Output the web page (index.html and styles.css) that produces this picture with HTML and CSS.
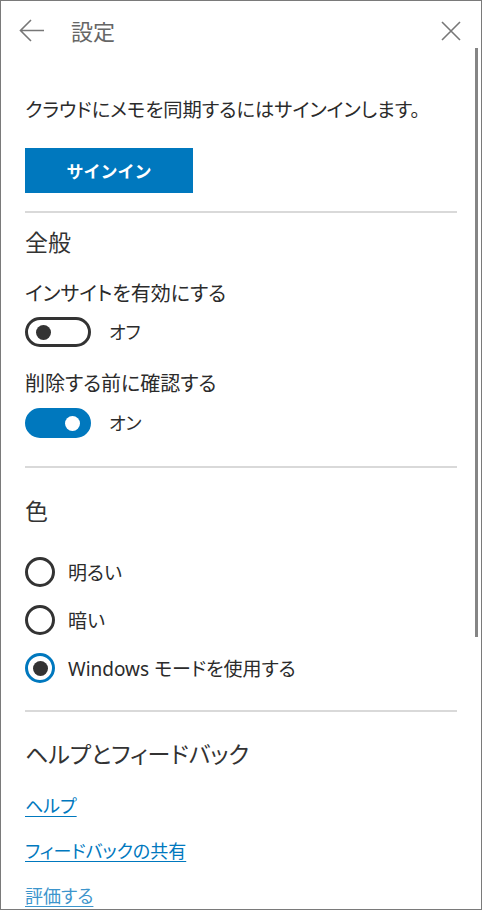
FILE: index.html
```html
<!DOCTYPE html>
<html lang="ja">
<head>
    <meta charset="UTF-8">
    <meta name="viewport" content="width=device-width, initial-scale=1.0">
    <title>設定</title>
    <link rel="stylesheet" href="styles.css">
</head>

<body>
    <div class="panel">
        <header class="titlebar">
            <svg class="icon-back" width="26" height="24" viewBox="0 0 26 24">
                <path d="M25 11.5 H1.5 M12 1 L1.5 11.5 L12 22" fill="none" stroke="#777" stroke-width="1.6"/>
            </svg>
            <h1>設定</h1>
            <svg class="icon-close" width="20" height="20" viewBox="0 0 20 20">
                <path d="M1 1 L19 19 M19 1 L1 19" fill="none" stroke="#777" stroke-width="1.6"/>
            </svg>
        </header>

        <div class="content">
            <p class="intro">クラウドにメモを同期するにはサインインします。</p>
            <button class="signin">サインイン</button>
            <hr class="divider">

            <!-- General -->
            <section class="general">
                <h2>全般</h2>
                <div class="setting">
                    <p class="label">インサイトを有効にする</p>
                    <div class="toggle-row">
                        <span class="toggle"><span class="knob"></span></span>
                        <span>オフ</span>
                    </div>
                </div>
                <div class="setting">
                    <p class="label">削除する前に確認する</p>
                    <div class="toggle-row">
                        <span class="toggle on"><span class="knob"></span></span>
                        <span>オン</span>
                    </div>
                </div>
            </section>
            <hr class="divider after-toggles">

            <!-- Colour -->
            <section class="colors">
                <h2>色</h2>
                <div class="radio-list">
                    <div class="radio-row"><span class="radio"></span><span>明るい</span></div>
                    <div class="radio-row"><span class="radio"></span><span>暗い</span></div>
                    <div class="radio-row"><span class="radio checked"></span><span>Windows モードを使用する</span></div>
                </div>
            </section>
            <hr class="divider">

            <!-- Help -->
            <section class="help">
                <h2>ヘルプとフィードバック</h2>
                <div class="links">
                    <a href="#">ヘルプ</a>
                    <a href="#">フィードバックの共有</a>
                    <a href="#" class="faded">評価する</a>
                </div>
            </section>
        </div>

        <div class="scrollbar"></div>
    </div>
</body>
</html>
```

FILE: styles.css
```css
body, html {
    margin: 0;
    padding: 0;
    background-color: #ffffff;
    font-family: "Noto Sans", "Noto Sans CJK JP", sans-serif;
    color: #2b2b2b;
}

.panel {
    position: relative;
    box-sizing: border-box;
    width: 482px;
    height: 910px;
    border: 1px solid #7a7a7a;
    overflow: hidden;
    font-feature-settings: "palt";
}

.titlebar {
    display: flex;
    align-items: center;
    height: 60px;
    padding: 0 20px 0 18px;
}

.titlebar h1 {
    margin: 0 0 0 26px;
    font-size: 22px;
    font-weight: normal;
    color: #666666;
    line-height: 30px;
}

.icon-close {
    margin-left: auto;
}

.content {
    padding: 0 24px;
}

p {
    margin: 0;
}

.intro {
    margin-top: 36px;
    font-size: 19.3px;
    line-height: 26px;
}

.signin {
    display: block;
    margin-top: 25px;
    width: 168px;
    height: 45px;
    border: none;
    background-color: #0078be;
    color: #ffffff;
    font-family: inherit;
    font-size: 17px;
    font-weight: bold;
    padding: 0;
}

.divider {
    margin: 18px 0 0 0;
    height: 2px;
    border: none;
    background-color: #d9d9d9;
}

.divider.after-toggles {
    margin-top: 28px;
}

h2 {
    margin: 0;
    font-size: 23px;
    font-weight: normal;
    line-height: 32px;
    color: #333333;
}

.general h2 {
    margin-top: 13px;
}

.colors h2 {
    margin-top: 27px;
}

.help h2 {
    margin-top: 26px;
}

.setting {
    margin-top: 23px;
}

.setting + .setting {
    margin-top: 24px;
}

.label {
    font-size: 20px;
    line-height: 26px;
}

.toggle-row {
    display: flex;
    align-items: center;
    gap: 18px;
    margin-top: 10px;
    font-size: 18px;
    line-height: 30px;
}

.setting + .setting .toggle-row {
    margin-top: 11px;
}

.toggle {
    position: relative;
    box-sizing: border-box;
    width: 66px;
    height: 30px;
    border: 3px solid #333333;
    border-radius: 15px;
}

.toggle .knob {
    position: absolute;
    top: 4.5px;
    left: 8px;
    width: 15px;
    height: 15px;
    border-radius: 50%;
    background-color: #333333;
}

.toggle.on {
    border-color: #0078be;
    background-color: #0078be;
}

.toggle.on .knob {
    left: auto;
    right: 8px;
    background-color: #ffffff;
}

.radio-list {
    margin-top: 21px;
}

.radio-row {
    display: flex;
    align-items: center;
    gap: 13px;
    height: 48px;
    font-size: 19px;
}

.radio {
    box-sizing: border-box;
    width: 30px;
    height: 30px;
    border: 3px solid #333333;
    border-radius: 50%;
    display: flex;
    align-items: center;
    justify-content: center;
}

.radio.checked {
    border-color: #0078be;
}

.radio.checked::after {
    content: "";
    width: 15px;
    height: 15px;
    border-radius: 50%;
    background-color: #333333;
}

.links {
    display: flex;
    flex-direction: column;
    align-items: flex-start;
    gap: 19px;
    margin-top: 23px;
}

.links a {
    font-size: 18px;
    line-height: 26px;
    color: #0078be;
    text-decoration: underline;
    text-underline-offset: 3px;
}

.links a.faded {
    color: #3d95cc;
}

.scrollbar {
    position: absolute;
    top: 47px;
    right: 3px;
    width: 3px;
    height: 589px;
    background-color: #858585;
}
```
